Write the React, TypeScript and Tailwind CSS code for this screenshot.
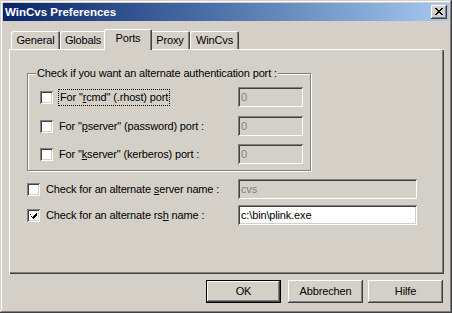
import React from 'react';

const raised =
  'shadow-[inset_-1px_-1px_#404040,inset_1px_1px_#ffffff,inset_-2px_-2px_#808080]';
const sunken =
  'shadow-[inset_1px_1px_#808080,inset_-1px_-1px_#ffffff,inset_2px_2px_#404040,inset_-2px_-2px_#d4d0c8]';
const font = "font-['Liberation_Sans',Arial,sans-serif]";

function Checkbox({ checked = false }: { checked?: boolean }) {
  return (
    <div className={`w-[13px] h-[13px] shrink-0 bg-white flex items-center justify-center ${sunken}`}>
      {checked && (
        <svg width="7" height="7" viewBox="0 0 7 7" shapeRendering="crispEdges">
          <path d="M0 2h1v3h1v1h1v1h1v-1h1v-1h1v-1h1v-3h-1v1h-1v1h-1v1h-1v1h-1v-1h-1v-1h-1z" fill="#000" />
        </svg>
      )}
    </div>
  );
}

function Edit({ value, disabled, w }: { value: string; disabled?: boolean; w: string }) {
  return (
    <div
      className={`${w} h-[20px] flex items-center pl-[3px] ${sunken} ${
        disabled ? 'bg-[#d4d0c8] text-[#808080]' : 'bg-white text-black'
      }`}
    >
      {value}
    </div>
  );
}

function Tab({ label, selected }: { label: string; selected?: boolean }) {
  return (
    <div
      className={`flex justify-center rounded-t-[2px] bg-[#d4d0c8] shadow-[inset_1px_1px_#ffffff,inset_-1px_0_#404040,inset_-2px_0_#808080] ${
        selected
          ? 'relative z-10 h-[21px] -mb-px -mx-[2px] pt-[3px] px-[2px]'
          : 'h-[18px] pt-[3px]'
      }`}
    >
      {label}
    </div>
  );
}

function Button({ label, isDefault, className = '' }: { label: string; isDefault?: boolean; className?: string }) {
  return (
    <div
      className={`w-[75px] h-[23px] flex items-center justify-center ${className} ${
        isDefault ? 'border border-black' : ''
      }`}
    >
      <div className={`w-full h-full flex items-center justify-center ${raised}`}>{label}</div>
    </div>
  );
}

export default function App() {
  return (
    <div
      className={`w-[452px] h-[313px] bg-[#d4d0c8] p-[3px] text-[11px] leading-[13px] tracking-[-0.15px] text-black ${font} shadow-[inset_-1px_-1px_#404040,inset_1px_1px_#d4d0c8,inset_-2px_-2px_#808080,inset_2px_2px_#ffffff]`}
    >
      {/* Title bar */}
      <div className="h-[18px] flex items-center justify-between bg-gradient-to-r from-[#0a246a] to-[#a6caf0] pl-[2px] pr-[2px]">
        <span className="text-white font-bold text-[11.5px] leading-[14px] tracking-normal">WinCvs Preferences</span>
        <div className={`w-[16px] h-[14px] bg-[#d4d0c8] flex items-center justify-center ${raised}`}>
          <svg width="8" height="7" viewBox="0 0 8 7" shapeRendering="crispEdges" className="-mt-px">
            <path d="M0 0h2v1h1v1h2v-1h1v-1h2v1h-1v1h-1v1h-1v1h1v1h1v1h1v1h-2v-1h-1v-1h-2v1h-1v1h-2v-1h1v-1h1v-1h1v-1h-1v-1h-1v-1h-1z" fill="#000" />
          </svg>
        </div>
      </div>

      {/* Tabs */}
      <div className="flex items-end h-[20px] mt-[8px] ml-[8px]">
        <div className="w-[49px]"><Tab label="General" /></div>
        <div className="w-[46px]"><Tab label="Globals" /></div>
        <div className="w-[44px] relative z-10"><Tab label="Ports" selected /></div>
        <div className="w-[40px]"><Tab label="Proxy" /></div>
        <div className="w-[49px]"><Tab label="WinCvs" /></div>
      </div>

      {/* Panel */}
      <div className="ml-[6px] w-[435px] h-[225px] pt-[24px] pl-[18px] shadow-[inset_1px_1px_#ffffff,inset_-1px_-1px_#404040,inset_-2px_-2px_#808080]">
        <div className="relative w-[284px] h-[98px] border border-[#808080] shadow-[inset_1px_1px_#ffffff,1px_1px_#ffffff] pl-[12px] pt-[13px]">
          <span className="absolute -top-[7px] left-[8px] bg-[#d4d0c8] px-px">
            Check if you want an alternate authentication port :
          </span>
          <div className="flex items-center h-[20px]">
            <div className="w-[198px] flex items-center">
              <Checkbox />
              <span className="ml-[5px] h-[17px] px-px flex items-center border border-dotted border-black">
                For "<u>r</u>cmd" (.rhost) port
              </span>
            </div>
            <Edit value="0" disabled w="w-[65px]" />
          </div>
          <div className="flex items-center h-[20px] mt-[9px]">
            <div className="w-[198px] flex items-center">
              <Checkbox />
              <span className="ml-[6px]">
                For "<u>p</u>server" (password) port :
              </span>
            </div>
            <Edit value="0" disabled w="w-[65px]" />
          </div>
          <div className="flex items-center h-[20px] mt-[8px]">
            <div className="w-[198px] flex items-center">
              <Checkbox />
              <span className="ml-[6px]">
                For "<u>k</u>server" (kerberos) port :
              </span>
            </div>
            <Edit value="0" disabled w="w-[65px]" />
          </div>
        </div>

        <div className="flex items-center h-[20px] mt-[8px]">
          <div className="w-[211px] flex items-center">
            <Checkbox />
            <span className="ml-[6px]">
              Check for an alternate <u>s</u>erver name :
            </span>
          </div>
          <Edit value="cvs" disabled w="w-[179px]" />
        </div>
        <div className="flex items-center h-[20px] mt-[6px]">
          <div className="w-[211px] flex items-center">
            <Checkbox checked />
            <span className="ml-[6px]">
              Check for an alternate rs<u>h</u> name :
            </span>
          </div>
          <Edit value="c:\bin\plink.exe" w="w-[179px]" />
        </div>
      </div>

      {/* Buttons */}
      <div className="flex mt-[6px] ml-[203px]">
        <Button label="OK" isDefault />
        <Button label="Abbrechen" className="ml-[7px]" />
        <Button label="Hilfe" className="ml-[5px]" />
      </div>
    </div>
  );
}
